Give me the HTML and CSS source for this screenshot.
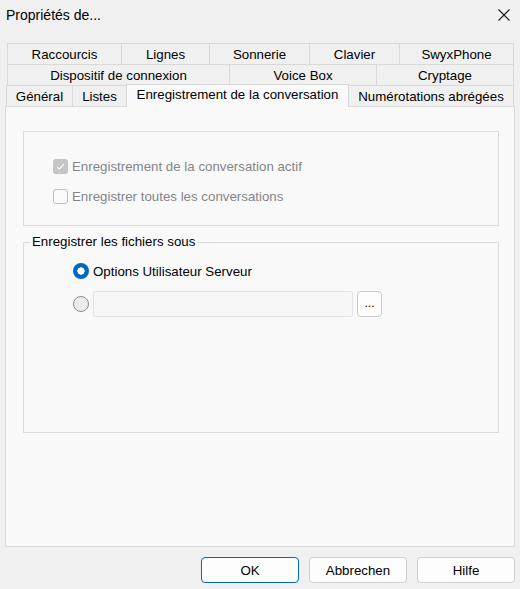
FILE: index.html
```html
<!DOCTYPE html>
<html lang="fr">
<head>
    <meta charset="UTF-8">
    <title>Propriétés de...</title>
    <link rel="stylesheet" href="styles.css">
</head>
<body>
    <div class="titlebar">
        <span class="title">Propriétés de...</span>
        <svg class="close" width="12" height="12" viewBox="0 0 12 12">
            <path d="M0.5 0.5 L11.5 11.5 M11.5 0.5 L0.5 11.5" stroke="#1a1a1a" stroke-width="1.1" fill="none"/>
        </svg>
    </div>

    <div class="tabs">
        <div class="tab-row row-1">
            <div class="tab">Raccourcis</div>
            <div class="tab">Lignes</div>
            <div class="tab">Sonnerie</div>
            <div class="tab">Clavier</div>
            <div class="tab last">SwyxPhone</div>
        </div>
        <div class="tab-row row-2">
            <div class="tab">Dispositif de connexion</div>
            <div class="tab">Voice Box</div>
            <div class="tab last">Cryptage</div>
        </div>
        <div class="tab-row row-3">
            <div class="tab">Général</div>
            <div class="tab">Listes</div>
            <div class="tab active">Enregistrement de la conversation</div>
            <div class="tab last after-active">Numérotations abrégées</div>
        </div>
    </div>

    <div class="panel">
        <div class="group">
            <div class="check-row disabled">
                <span class="checkbox checked">
                    <svg width="15" height="15" viewBox="0 0 15 15">
                        <path d="M4 7.6 L6.4 10 L11 5.2" stroke="#fff" stroke-width="1.2" fill="none"/>
                    </svg>
                </span>
                <span>Enregistrement de la conversation actif</span>
            </div>
            <div class="check-row disabled">
                <span class="checkbox"></span>
                <span>Enregistrer toutes les conversations</span>
            </div>
        </div>

        <fieldset class="group-box">
            <legend>Enregistrer les fichiers sous</legend>
            <div class="group-body">
                <div class="radio-row">
                    <span class="radio checked"></span>
                    <span>Options Utilisateur Serveur</span>
                </div>
                <div class="radio-row">
                    <span class="radio"></span>
                    <span class="path-field"></span>
                    <span class="browse">...</span>
                </div>
            </div>
        </fieldset>
    </div>

    <div class="buttons">
        <button class="default">OK</button>
        <button>Abbrechen</button>
        <button>Hilfe</button>
    </div>
</body>
</html>
```

FILE: styles.css
```css
* {
    margin: 0;
    padding: 0;
    box-sizing: border-box;
}

body {
    width: 520px;
    height: 589px;
    overflow: hidden;
    background: #f0f0f0;
    font-family: "Liberation Sans", Arial, sans-serif;
    font-size: 13.3px;
    color: #000;
}

/* title bar */
.titlebar {
    height: 30px;
    display: flex;
    align-items: center;
    justify-content: space-between;
    padding: 0 10px 0 6px;
}

.title {
    font-size: 14px;
}

.close {
    display: block;
}

/* tab strip, three stacked rows */
.tabs {
    margin-top: 13px;
}

.tab-row {
    display: grid;
    grid-auto-rows: 21px;
    align-items: end;
}

.row-1 {
    margin-left: 7px;
    grid-template-columns: 114px 88px 100px 90px 115px;
}

.row-2 {
    margin-left: 7px;
    grid-template-columns: 222px 147px 138px;
}

.row-3 {
    margin-left: 6px;
    grid-template-columns: 66px 54px 223px 165px;
}

.tab {
    height: 21px;
    border-top: 1px solid #d9d9d9;
    border-left: 1px solid #d9d9d9;
    background: #f0f0f0;
    display: flex;
    align-items: center;
    justify-content: center;
    white-space: nowrap;
}

.tab.last {
    border-right: 1px solid #d9d9d9;
}

.tab.after-active {
    border-left: none;
}

.tab.active {
    height: 23px;
    margin-bottom: -1px;
    padding-bottom: 3px;
    border-right: 1px solid #d9d9d9;
    background: #f9f9f9;
    position: relative;
    z-index: 1;
}

/* page content */
.panel {
    margin: 0 5px;
    height: 441px;
    border: 1px solid #dadada;
    background: #f9f9f9;
    padding: 24px 15px 0 17px;
}

.group {
    height: 95px;
    border: 1px solid #dcdcdc;
    padding: 24px 0 0 29px;
}

.check-row {
    height: 20px;
    display: flex;
    align-items: center;
    gap: 4px;
}

.check-row + .check-row {
    margin-top: 10px;
}

.check-row.disabled {
    color: #858585;
}

.checkbox {
    width: 15px;
    height: 15px;
    border: 1px solid #bdbdbd;
    border-radius: 3px;
    background: #fbfbfb;
    flex-shrink: 0;
}

.checkbox.checked {
    border: none;
    background: #c5c5c5;
}

.checkbox svg {
    display: block;
}

.group-box {
    margin-top: 8px;
    border: 1px solid #dcdcdc;
    padding: 11px 0 115px 6px;
    min-width: 0;
}

.group-box legend {
    padding: 0 2px;
    line-height: 16px;
}

.group-body {
    padding-left: 43px;
}

.radio-row {
    display: flex;
    align-items: center;
    gap: 4px;
    height: 20px;
}

.radio-row + .radio-row {
    margin-top: 10px;
    height: 26px;
}

.radio {
    width: 16px;
    height: 16px;
    border-radius: 50%;
    border: 1px solid #8a8a8a;
    background: #ececec;
    flex-shrink: 0;
}

.radio.checked {
    border: none;
    background: radial-gradient(circle, #fff 0 3.4px, #0067c0 3.9px);
}

.path-field {
    width: 260px;
    height: 26px;
    border: 1px solid #e3e3e3;
    border-radius: 2px;
    background: #f7f7f7;
}

.browse {
    width: 25px;
    height: 26px;
    border: 1px solid #cccccc;
    border-radius: 4px;
    background: #fdfdfd;
    display: flex;
    align-items: center;
    justify-content: center;
    font-size: 12px;
    padding-bottom: 2px;
}

/* dialog buttons */
.buttons {
    margin-top: 10px;
    display: flex;
    justify-content: flex-end;
    gap: 10px;
    padding-right: 5px;
}

button {
    width: 98px;
    height: 26px;
    border: 1px solid #d0d0d0;
    border-radius: 4px;
    background: #fdfdfd;
    font-family: inherit;
    font-size: 13.3px;
    color: #000;
}

button.default {
    border-color: #0067c0;
}
```
